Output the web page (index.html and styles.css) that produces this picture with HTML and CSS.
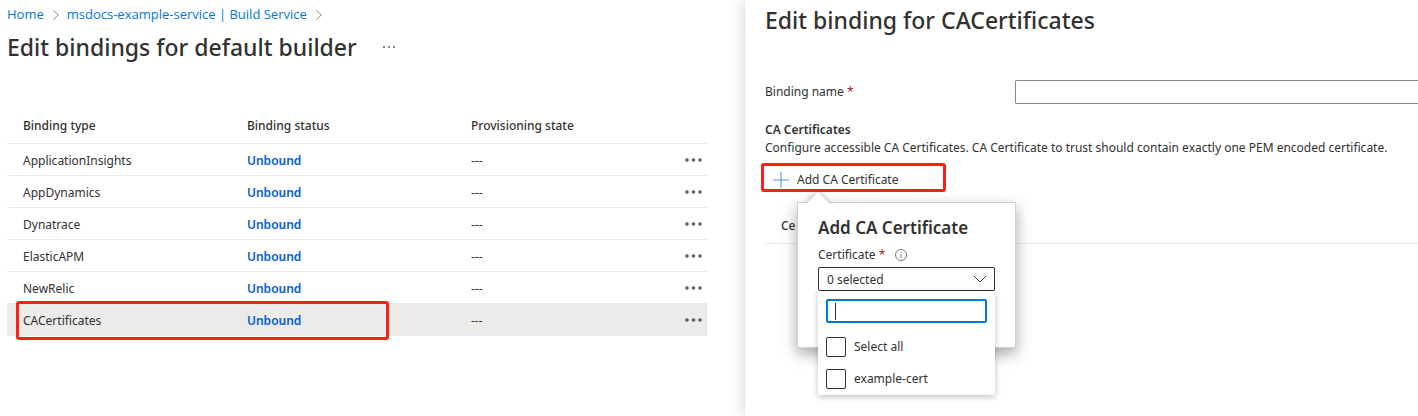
FILE: index.html
```html
<!DOCTYPE html>
<html lang="en">
<head>
<meta charset="utf-8">
<title>Edit bindings for default builder</title>
<link rel="stylesheet" href="styles.css">
</head>
<body>
<div class="layout">
  <main class="page">
    <nav class="breadcrumb" aria-label="Breadcrumb">
      <a href="#">Home</a>
      <svg class="crumb-arrow" viewBox="0 0 6 10"><path d="M.5 .5 5.3 5 .5 9.500"/></svg>
      <a href="#">msdocs-example-service | Build Service</a>
      <svg class="crumb-arrow" viewBox="0 0 6 10"><path d="M.5 .5 5.3 5 .5 9.500"/></svg>
    </nav>
    <header class="page-head">
      <h1 class="title">Edit bindings for default builder</h1>
      <button class="icon-button" type="button" aria-label="More">
        <svg class="more-small" viewBox="0 0 12 2"><path d="M0 0h2v2H0zM5 0h2v2H5zM10 0h2v2h-2z"/></svg>
      </button>
    </header>
    <table class="bindings">
      <thead>
        <tr><th>Binding type</th><th>Binding status</th><th>Provisioning state</th><th class="menu-cell"></th></tr>
      </thead>
      <tbody>
        <tr><td>ApplicationInsights</td><td><a href="#">Unbound</a></td><td>---</td><td class="menu-cell"><button class="icon-button" type="button" aria-label="Row menu"><svg class="more" viewBox="0 0 18 4"><circle cx="2" cy="2" r="1.800"/><circle cx="8.500" cy="2" r="1.800"/><circle cx="15" cy="2" r="1.800"/></svg></button></td></tr>
        <tr><td>AppDynamics</td><td><a href="#">Unbound</a></td><td>---</td><td class="menu-cell"><button class="icon-button" type="button" aria-label="Row menu"><svg class="more" viewBox="0 0 18 4"><circle cx="2" cy="2" r="1.800"/><circle cx="8.500" cy="2" r="1.800"/><circle cx="15" cy="2" r="1.800"/></svg></button></td></tr>
        <tr><td>Dynatrace</td><td><a href="#">Unbound</a></td><td>---</td><td class="menu-cell"><button class="icon-button" type="button" aria-label="Row menu"><svg class="more" viewBox="0 0 18 4"><circle cx="2" cy="2" r="1.800"/><circle cx="8.500" cy="2" r="1.800"/><circle cx="15" cy="2" r="1.800"/></svg></button></td></tr>
        <tr><td>ElasticAPM</td><td><a href="#">Unbound</a></td><td>---</td><td class="menu-cell"><button class="icon-button" type="button" aria-label="Row menu"><svg class="more" viewBox="0 0 18 4"><circle cx="2" cy="2" r="1.800"/><circle cx="8.500" cy="2" r="1.800"/><circle cx="15" cy="2" r="1.800"/></svg></button></td></tr>
        <tr><td>NewRelic</td><td><a href="#">Unbound</a></td><td>---</td><td class="menu-cell"><button class="icon-button" type="button" aria-label="Row menu"><svg class="more" viewBox="0 0 18 4"><circle cx="2" cy="2" r="1.800"/><circle cx="8.500" cy="2" r="1.800"/><circle cx="15" cy="2" r="1.800"/></svg></button></td></tr>
        <tr class="selected"><td>CACertificates<span class="row-highlight"></span></td><td><a href="#">Unbound</a></td><td>---</td><td class="menu-cell"><button class="icon-button" type="button" aria-label="Row menu"><svg class="more" viewBox="0 0 18 4"><circle cx="2" cy="2" r="1.800"/><circle cx="8.500" cy="2" r="1.800"/><circle cx="15" cy="2" r="1.800"/></svg></button></td></tr>
      </tbody>
    </table>
  </main>

  <aside class="panel">
    <h2 class="title">Edit binding for CACertificates</h2>
    <div class="field">
      <label for="binding-name">Binding name <span class="required">*</span></label>
      <input id="binding-name" class="text-box" type="text">
    </div>
    <section class="certificates">
      <h3 class="section-title">CA Certificates</h3>
      <p class="description">Configure accessible CA Certificates. CA Certificate to trust should contain exactly one PEM encoded certificate.</p>
      <div class="command">
        <button class="add-button" type="button">
          <svg class="plus" viewBox="0 0 16 16"><path d="M8 0v16M0 8h16"/></svg>
          Add CA Certificate
        </button>
        <div class="callout" role="dialog" aria-labelledby="callout-title">
          <svg class="beak" viewBox="0 0 42 11"><path d="M10 11 21 0 32 11z"/></svg>
          <h4 id="callout-title" class="callout-title">Add CA Certificate</h4>
          <div class="callout-label">
            <label for="certificate">Certificate <span class="required">*</span></label>
            <svg class="info" viewBox="0 0 12 12"><circle cx="6" cy="6" r="5.500"/><path d="M6 5v4M6 3v1"/></svg>
          </div>
          <div class="select-wrap">
            <select id="certificate" class="select"><option>0 selected</option></select>
            <svg class="chevron" viewBox="0 0 14 8"><path d="M1 1l6 6 6-6"/></svg>
            <div class="menu">
              <input class="filter" type="text" aria-label="Filter certificates">
              <label class="choice"><input type="checkbox">Select all</label>
              <label class="choice"><input type="checkbox">example-cert</label>
            </div>
          </div>
        </div>
      </div>
      <table class="cert-table"><thead><tr><th>Ce</th></tr></thead></table>
    </section>
  </aside>
</div>
</body>
</html>
```
FILE: styles.css
```css
* {
  box-sizing: border-box;
}

body {
  margin: 0;
  background: #fff;
  color: #323130;
  font: 12px/18px "Noto Sans", "Open Sans", sans-serif;
  overflow: hidden;
}

h1, h2, h3, h4, p {
  margin: 0;
}

button, input, select {
  font: inherit;
  color: inherit;
}

a {
  text-decoration: none;
}

svg {
  display: block;
  flex: none;
}

.layout {
  display: grid;
  grid-template-columns: minmax(0, 745fr) minmax(0, 673fr);
  min-height: 100vh;
}

.page {
  padding: 5px 38px 0 7px;
}

.breadcrumb {
  display: flex;
  align-items: center;
  gap: 7px;
  font-family: "Open Sans", "Noto Sans", sans-serif;
  font-size: 13px;
}

.breadcrumb a {
  color: #0078d4;
}

.crumb-arrow {
  width: 6px;
  height: 10px;
  margin: 2px 1px 0 2px;
  fill: none;
  stroke: #8a8886;
}

.page-head {
  display: flex;
  align-items: center;
  gap: 26px;
  margin-top: 8px;
}

.title {
  font-size: 23px;
  line-height: 32px;
  font-weight: 500;
}

.icon-button {
  padding: 0;
  border: 0;
  background: none;
}

.more-small {
  width: 12px;
  height: 2px;
  fill: #8a8886;
}

.more {
  width: 18px;
  height: 4px;
  fill: #605e5c;
}

table {
  border-collapse: separate;
  border-spacing: 0;
  width: 100%;
  table-layout: fixed;
}

th, td {
  padding: 0 0 0 16px;
  text-align: left;
  border-bottom: 1px solid #edebe9;
}

th {
  font-weight: 500;
}

.bindings {
  margin-top: 45px;
}

.bindings th {
  height: 36px;
  width: 32%;
}

.bindings td {
  height: 32px;
  padding-top: 2px;
}

.bindings .menu-cell {
  width: 4%;
  padding: 0 4px 0 0;
}

.menu-cell .icon-button {
  display: flex;
  margin-left: auto;
}

.bindings td a {
  color: #015cda;
  font-weight: 600;
}

.selected td {
  position: relative;
  background: #edebe9;
}

.row-highlight {
  position: absolute;
  z-index: 1;
  top: -3px;
  left: 9px;
  width: 373px;
  height: 39px;
  border: 3px solid #ff1f14;
  border-radius: 3px;
  pointer-events: none;
}

.panel {
  padding: 4px 0 0 20px;
  background: #fff;
  box-shadow: 0 0 14px rgba(0, 0, 0, .2);
}

.field {
  display: grid;
  grid-template-columns: 250px minmax(0, 1fr);
  align-items: center;
  margin-top: 44px;
}

.required {
  color: #a4262c;
}

.text-box {
  width: 100%;
  height: 24px;
  border: 1px solid #8a8886;
  border-right: 0;
  border-radius: 2px 0 0 2px;
}

.certificates {
  margin-top: 17px;
}

.section-title {
  font-size: 12px;
  line-height: 18px;
  font-weight: 600;
}

.description {
  white-space: nowrap;
}

.command {
  position: relative;
  margin: 6px 0 0 -4px;
}

.add-button {
  display: flex;
  align-items: center;
  gap: 8px;
  width: 185px;
  height: 29px;
  padding: 4px 0 0 9px;
  border: 3px solid #ff1f14;
  border-radius: 3px;
  background: #fff;
}

.plus {
  width: 16px;
  height: 16px;
  fill: none;
  stroke: #4a8ee8;
}

.callout {
  position: absolute;
  z-index: 2;
  top: 39px;
  left: 36px;
  width: 219px;
  height: 146px;
  padding: 12px 20px;
  border: 1px solid #d2d0ce;
  background: #fff;
  box-shadow: 0 6px 14px rgba(0, 0, 0, .35);
}

.beak {
  position: absolute;
  top: -11px;
  left: -1px;
  width: 42px;
  height: 11px;
}

.beak path {
  fill: #fff;
  filter: drop-shadow(0 1px 3px rgba(0, 0, 0, .45));
}

.callout-title {
  font-size: 17px;
  line-height: 26px;
  font-weight: 600;
}

.callout-label {
  display: flex;
  align-items: center;
  gap: 10px;
  margin-top: 5px;
}

.info {
  width: 12px;
  height: 12px;
  fill: none;
  stroke: #797775;
}

.select-wrap {
  position: relative;
  margin-top: 3px;
}

.select {
  display: block;
  appearance: none;
  width: 100%;
  height: 24px;
  padding: 1px 8px 0;
  border: 1px solid #323130;
  border-radius: 2px;
  background: #fff;
}

.chevron {
  position: absolute;
  top: 8px;
  right: 8px;
  width: 14px;
  height: 8px;
  fill: none;
  stroke: #323130;
  pointer-events: none;
}

.menu {
  position: absolute;
  top: 100%;
  left: 0;
  right: 0;
  display: grid;
  gap: 12px;
  padding: 8px 8px 6px;
  border-radius: 2px;
  background: #fff;
  box-shadow: 0 2px 6px rgba(0, 0, 0, .25);
}

.filter {
  width: 100%;
  height: 24px;
  padding: 0 8px;
  border: 2px solid #0078d4;
  border-radius: 2px;
  outline: 0;
  caret-color: transparent;
  background: linear-gradient(#323130, #323130) 7px center / 1px 17px no-repeat #fff;
}

.filter + .choice {
  margin-top: 2px;
}

.choice {
  display: flex;
  align-items: center;
  gap: 8px;
}

.choice input {
  appearance: none;
  width: 20px;
  height: 20px;
  margin: 0;
  border: 1px solid #323130;
  border-radius: 2px;
  background: #fff;
}

.cert-table {
  margin-top: 16px;
}

.cert-table th {
  height: 36px;
}
```
